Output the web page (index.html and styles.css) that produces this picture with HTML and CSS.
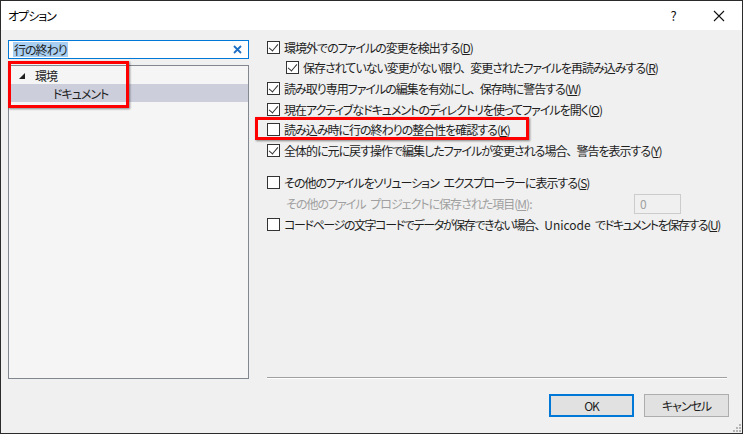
FILE: index.html
```html
<!DOCTYPE html>
<html lang="ja">
<head>
    <meta charset="UTF-8">
    <title>オプション</title>
    <link rel="stylesheet" href="styles.css">
</head>
<body>
    <div class="window">
        <div class="titlebar">
            <span class="title">オプション</span>
            <div class="title-buttons">
                <span class="help">?</span>
                <span class="close">
                    <svg width="12" height="12" viewBox="0 0 12 12"><path d="M1 1 L11 11 M11 1 L1 11" stroke="#111" stroke-width="1.1" fill="none"/></svg>
                </span>
            </div>
        </div>

        <div class="content">
            <div class="main">
                <div class="left">
                    <div class="search">
                        <span class="search-text">行の終わり</span>
                        <svg class="clear" width="9" height="9" viewBox="0 0 9 9"><path d="M1 1 L8 8 M8 1 L1 8" stroke="#1c6fc4" stroke-width="1.8" fill="none"/></svg>
                    </div>
                    <div class="tree">
                        <div class="tree-row">
                            <svg class="arrow" width="6" height="6" viewBox="0 0 6 6"><path d="M6 0 L6 6 L0 6 Z" fill="#1e1e1e"/></svg>
                            <span>環境</span>
                        </div>
                        <div class="tree-row child selected">
                            <span>ドキュメント</span>
                        </div>
                    </div>
                </div>

                <div class="right">
                    <div class="options">
                        <div class="opt">
                            <span class="check on"></span>
                            <span>環境外でのファイルの変更を検出する(<u>D</u>)</span>
                        </div>
                        <div class="opt indent">
                            <span class="check on"></span>
                            <span>保存されていない変更がない限り<span class="comma">、</span>変更されたファイルを再読み込みする(<u>R</u>)</span>
                        </div>
                        <div class="opt">
                            <span class="check on"></span>
                            <span>読み取り専用ファイルの編集を有効にし<span class="comma">、</span>保存時に警告する(<u>W</u>)</span>
                        </div>
                        <div class="opt">
                            <span class="check on"></span>
                            <span>現在アクティブなドキュメントのディレクトリを使ってファイルを開く(<u>O</u>)</span>
                        </div>
                        <div class="opt">
                            <span class="check"></span>
                            <span>読み込み時に行の終わりの整合性を確認する(<u>K</u>)</span>
                        </div>
                        <div class="opt">
                            <span class="check on"></span>
                            <span>全体的に元に戻す操作で編集したファイルが変更される場合<span class="comma">、</span>警告を表示する(<u>Y</u>)</span>
                        </div>

                        <div class="opt group">
                            <span class="check"></span>
                            <span>その他のファイルをソリューション エクスプローラーに表示する(<u>S</u>)</span>
                        </div>
                        <div class="opt indent field-row">
                            <span class="disabled">その他のファイル プロジェクトに保存された項目(<u>M</u>):</span>
                            <span class="num-box">0</span>
                        </div>
                        <div class="opt tight">
                            <span class="check"></span>
                            <span>コードページの文字コードでデータが保存できない場合<span class="comma">、</span><span class="latin">Unicode</span> でドキュメントを保存する(<u>U</u>)</span>
                        </div>
                    </div>
                    <div class="separator"></div>
                </div>
            </div>

            <div class="footer">
                <button class="btn default">OK</button>
                <button class="btn">キャンセル</button>
            </div>

            <!-- red annotation frames -->
            <div class="mark mark-tree"></div>
            <div class="mark mark-option"></div>

            <svg class="grip" width="10" height="10" viewBox="0 0 10 10">
                <rect x="8" y="2" width="2" height="2" fill="#b5b5b5"/>
                <rect x="5" y="5" width="2" height="2" fill="#b5b5b5"/>
                <rect x="8" y="5" width="2" height="2" fill="#b5b5b5"/>
                <rect x="2" y="8" width="2" height="2" fill="#b5b5b5"/>
                <rect x="5" y="8" width="2" height="2" fill="#b5b5b5"/>
                <rect x="8" y="8" width="2" height="2" fill="#b5b5b5"/>
            </svg>
        </div>
    </div>
</body>
</html>
```

FILE: styles.css
```css
* {
    box-sizing: border-box;
}

body {
    margin: 0;
    font-family: "Noto Sans CJK JP", "Noto Sans", sans-serif;
    font-size: 12px;
    font-feature-settings: "palt";
    letter-spacing: -1px;
    word-spacing: 3px;
    color: #1e1e1e;
    background: #fff;
}

.window {
    width: 743px;
    height: 434px;
    border: 1px solid #2b2b2b;
    display: flex;
    flex-direction: column;
    background: #f0f0f0;
}

.titlebar {
    height: 29px;
    background: #fff;
    display: flex;
    align-items: center;
    justify-content: space-between;
    padding-left: 7px;
}

.title {
    color: #000;
}

.title-buttons {
    display: flex;
    align-items: center;
    height: 100%;
}

.help {
    width: 46px;
    text-align: center;
    font-size: 13px;
    color: #111;
}

.close {
    width: 46px;
    height: 100%;
    display: flex;
    align-items: center;
    justify-content: center;
}

.content {
    flex: 1;
    display: flex;
    flex-direction: column;
    position: relative;
}

.main {
    flex: 1;
    display: flex;
    gap: 18px;
    padding: 0 15px 0 7px;
}

/* left side */
.left {
    width: 241px;
    flex-shrink: 0;
    display: flex;
    flex-direction: column;
    padding-top: 10px;
}

.search {
    height: 19px;
    background: #fff;
    border: 1px solid #0078d7;
    display: flex;
    align-items: center;
    justify-content: space-between;
    padding: 0 6px 0 4px;
}

.search-text {
    background: #a9cff2;
    line-height: 15px;
    padding: 0 1px;
}

.tree {
    flex: 1;
    margin-top: 6px;
    border: 1px solid #828790;
    background: #f5f5f5;
}

.tree-row {
    height: 18px;
    display: flex;
    align-items: center;
    padding-left: 10px;
}

.tree-row .arrow {
    margin-right: 10px;
    margin-top: 1px;
}

.tree-row.child {
    padding-left: 44px;
}

.tree-row.selected {
    background: #cccedb;
}

/* right side */
.right {
    flex: 1;
    min-width: 0;
    display: flex;
    flex-direction: column;
    padding-top: 7px;
}

.options {
    flex: 1;
}

.opt {
    height: 20.6px;
    display: flex;
    align-items: center;
    white-space: nowrap;
}

.opt.indent {
    padding-left: 19px;
}

.opt.group {
    margin-top: 11px;
    height: 21px;
}

.opt.field-row {
    height: 22px;
    justify-content: space-between;
    padding-right: 46px;
}

.opt.tight {
    letter-spacing: -1.4px;
}

.comma {
    margin-right: 5px;
}

.latin {
    letter-spacing: 0;
}

.check {
    width: 13px;
    height: 13px;
    border: 1px solid #333;
    background: #fff;
    margin-right: 4px;
    flex-shrink: 0;
    position: relative;
}

.check.on::after {
    content: "";
    position: absolute;
    left: 3px;
    top: 0px;
    width: 4px;
    height: 8px;
    border-right: 1.5px solid #333;
    border-bottom: 1.5px solid #333;
    transform: rotate(40deg);
}

.disabled {
    color: #a0a0a0;
}

.num-box {
    width: 47px;
    height: 20px;
    border: 1px solid #cccccc;
    background: #f0f0f0;
    color: #a0a0a0;
    padding-left: 5px;
    line-height: 18px;
}

.separator {
    height: 2px;
    border-top: 1px solid #a0a0a0;
    border-bottom: 1px solid #fff;
}

/* buttons */
.footer {
    display: flex;
    justify-content: flex-end;
    gap: 10px;
    padding: 15px 13px 16px 0;
}

.btn {
    width: 85px;
    height: 23px;
    background: #e1e1e1;
    border: 1px solid #adadad;
    font-family: inherit;
    font-size: 12px;
    font-feature-settings: "palt";
    letter-spacing: -1px;
    color: #1e1e1e;
    padding: 0;
}

.btn.default {
    border: 2px solid #0078d7;
}

/* red highlight frames */
.mark {
    position: absolute;
    border: 3px solid #f00;
    box-shadow: 1px 1px 2px rgba(0, 0, 0, 0.45);
}

.mark-tree {
    left: 7px;
    top: 31px;
    width: 121px;
    height: 47px;
}

.mark-option {
    left: 254px;
    top: 87px;
    width: 274px;
    height: 23px;
}

.grip {
    position: absolute;
    right: 1px;
    bottom: 1px;
}
```
